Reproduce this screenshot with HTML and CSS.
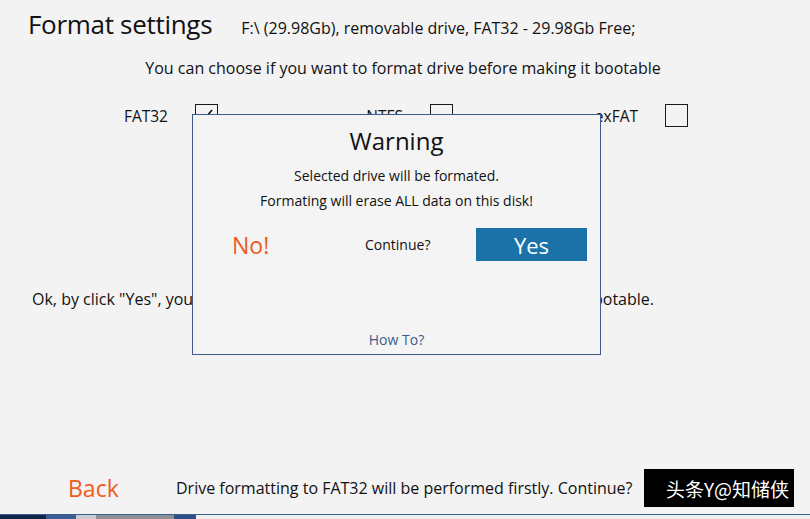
FILE: index.html
```html
<!DOCTYPE html>
<html>
<head>
<meta charset="utf-8">
<link rel="stylesheet" href="styles.css">
</head>
<body>
<div class="app">
  <header class="top">
    <h1 class="title">Format settings</h1>
    <span class="drive">F:\ (29.98Gb), removable drive, FAT32 - 29.98Gb Free;</span>
  </header>
  <p class="subtitle">You can choose if you want to format drive before making it bootable</p>
  <div class="opts">
    <div class="opt"><span class="opt-label">FAT32</span><span class="cb checked"><svg viewBox="0 0 22 22" width="22" height="22"><path d="M5 11.5 9 15.5 17 6" fill="none" stroke="#111" stroke-width="1.6"/></svg></span></div>
    <div class="opt"><span class="opt-label">NTFS</span><span class="cb"></span></div>
    <div class="opt"><span class="opt-label">exFAT</span><span class="cb"></span></div>
  </div>
  <p class="agree"><span>Ok, by click "Yes", you agree that</span><span>the drive will be made bootable.</span></p>
  <div class="spacer"></div>
  <footer class="bottom">
    <span class="back">Back</span>
    <span class="question">Drive formatting to FAT32 will be performed firstly. Continue?</span>
    <span class="mark">头条Y@知储侠</span>
  </footer>
  <div class="strip">
    <span class="s1"></span><span class="s2"></span><span class="s3"></span><span class="s4"></span><span class="s5"></span>
  </div>

  <div class="dialog">
    <div class="d-title">Warning</div>
    <div class="d-line">Selected drive will be formated.</div>
    <div class="d-line">Formating will erase ALL data on this disk!</div>
    <div class="d-row">
      <span class="no">No!</span>
      <span class="cont">Continue?</span>
      <span class="yes">Yes</span>
    </div>
    <div class="d-fill"></div>
    <div class="howto">How To?</div>
  </div>
</div>
</body>
</html>
```

FILE: styles.css
```css
* { box-sizing: border-box; }
html, body { margin: 0; padding: 0; }
body {
  background: #f3f3f3;
  font-family: "Open Sans", "Noto Sans", sans-serif;
  color: #111;
  width: 810px;
  height: 519px;
  overflow: hidden;
}
.app {
  position: relative;
  width: 810px;
  height: 519px;
  display: flex;
  flex-direction: column;
}
.top {
  display: flex;
  align-items: baseline;
  padding: 6px 0 0 28px;
  height: 50px;
}
.title {
  margin: 0;
  font-size: 26px;
  font-weight: 400;
  letter-spacing: -0.3px;
}
.drive {
  margin-left: 29px;
  font-size: 16px;
}
.subtitle {
  margin: 7px 0 0 0;
  text-align: center;
  font-size: 16px;
  padding-right: 4px;
}
.opts {
  display: flex;
  padding-left: 100px;
  margin-top: 25px;
}
.opt {
  width: 235px;
  display: flex;
  align-items: center;
}
.opt-label {
  width: 68px;
  text-align: right;
  font-size: 15.5px;
}
.cb {
  margin-left: 27px;
  width: 23px;
  height: 23px;
  border: 1px solid #1a1a1a;
  display: block;
}
.cb svg { display: block; margin: -1px; }
.agree {
  margin: 161px 0 0 32px;
  width: 622px;
  font-size: 16px;
  display: flex;
  justify-content: space-between;
}
.spacer { flex: 1; }
.bottom {
  display: flex;
  align-items: center;
  height: 38px;
  padding-left: 68px;
  margin-bottom: 7px;
}
.back {
  color: #f05a1e;
  font-size: 23px;
  width: 108px;
}
.question {
  font-size: 16px;
  width: 468px;
}
.mark {
  background: #000;
  color: #fff;
  width: 150px;
  height: 38px;
  display: flex;
  align-items: center;
  padding-left: 22px;
  font-family: "Noto Sans CJK SC", sans-serif;
  font-size: 19px;
  white-space: nowrap;
  overflow: hidden;
}
.strip {
  height: 5px;
  display: flex;
  border-top: 1px solid #3c5f8a;
  background: #eef0f3;
}
.strip span { display: block; height: 100%; }
.s1 { width: 46px; background: #10264a; }
.s2 { width: 30px; background: #3a5d93; }
.s3 { width: 20px; background: #c8ccd2; }
.s4 { width: 78px; background: #8d9096; }
.s5 { width: 22px; background: #2e4f86; }

.dialog {
  position: absolute;
  left: 192px;
  top: 114px;
  width: 409px;
  height: 241px;
  border: 1px solid #3f5b8c;
  background: #f4f4f4;
  display: flex;
  flex-direction: column;
  align-items: center;
}
.d-title {
  font-size: 24px;
  margin-top: 9px;
  line-height: 34px;
}
.d-line {
  font-size: 14px;
  line-height: 25px;
}
.d-title + .d-line { margin-top: 5px; }
.d-row {
  width: 100%;
  display: flex;
  align-items: center;
  margin-top: 15px;
  padding-left: 39px;
  height: 33px;
}
.no {
  color: #f05a1e;
  font-size: 23px;
  width: 133px;
}
.cont {
  font-size: 14px;
  width: 111px;
}
.yes {
  background: #1a72a9;
  color: #fff;
  width: 111px;
  height: 33px;
  font-size: 22px;
  display: flex;
  align-items: center;
  justify-content: center;
}
.d-fill { flex: 1; }
.howto {
  color: #3a5b8f;
  font-size: 14px;
  margin-bottom: 5px;
}
```
